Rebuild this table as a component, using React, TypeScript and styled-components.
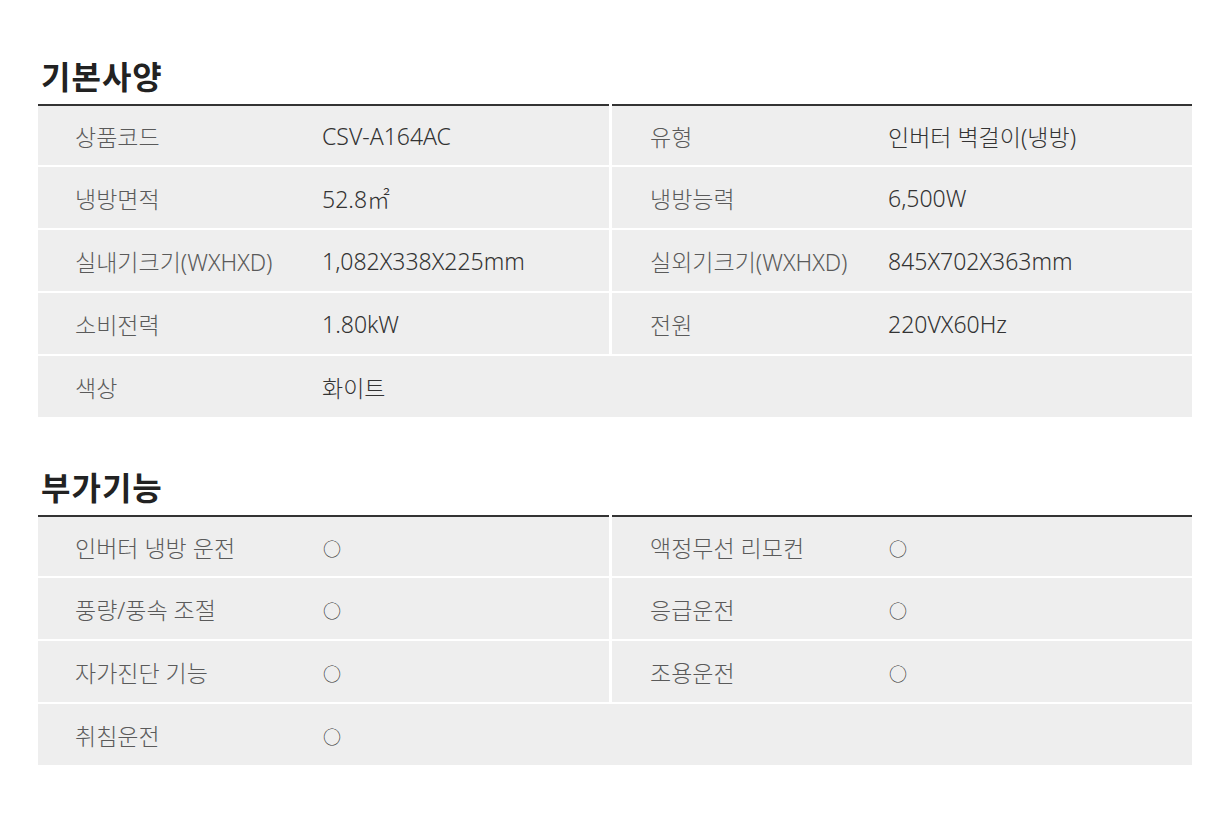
import React from 'react';
import styled, { createGlobalStyle } from 'styled-components';

type Spec = { label: string; value: string };

const basicSpecs: Spec[] = [
  { label: '상품코드', value: 'CSV-A164AC' },
  { label: '유형', value: '인버터 벽걸이(냉방)' },
  { label: '냉방면적', value: '52.8㎡' },
  { label: '냉방능력', value: '6,500W' },
  { label: '실내기크기(WXHXD)', value: '1,082X338X225mm' },
  { label: '실외기크기(WXHXD)', value: '845X702X363mm' },
  { label: '소비전력', value: '1.80kW' },
  { label: '전원', value: '220VX60Hz' },
  { label: '색상', value: '화이트' },
];

const extraSpecs: Spec[] = [
  { label: '인버터 냉방 운전', value: '○' },
  { label: '액정무선 리모컨', value: '○' },
  { label: '풍량/풍속 조절', value: '○' },
  { label: '응급운전', value: '○' },
  { label: '자가진단 기능', value: '○' },
  { label: '조용운전', value: '○' },
  { label: '취침운전', value: '○' },
];

const GlobalStyle = createGlobalStyle`
  html, body {
    margin: 0;
    padding: 0;
    background: #ffffff;
  }
  body {
    font-family: 'Noto Sans', 'Noto Sans CJK KR', sans-serif;
    color: #333;
  }
`;

const Page = styled.div`
  width: 1154px;
  padding: 57px 0 40px 38px;
`;

const Section = styled.section`
  & + & {
    margin-top: 51px;
  }
`;

const Title = styled.h2`
  margin: 0 0 11px 3px;
  font-family: 'Noto Sans CJK KR', sans-serif;
  font-size: 32px;
  line-height: 36px;
  font-weight: 700;
  color: #222;
  letter-spacing: 1px;
`;

const Table = styled.div`
  display: grid;
  grid-template-columns: 571px 580px;
  column-gap: 3px;
  row-gap: 2px;
`;

const Cell = styled.div<{ $first: boolean; $wide: boolean }>`
  display: flex;
  align-items: center;
  height: 61px;
  box-sizing: border-box;
  background: #eeeeee;
  border-top: ${({ $first }) => ($first ? '2px solid #333' : 'none')};
  padding-left: ${({ $wide }) => ($wide ? '37px' : '0')};
  grid-column: ${({ $wide }) => ($wide ? '1 / -1' : 'auto')};
`;

const Label = styled.div<{ $width: number; $pad: number }>`
  box-sizing: border-box;
  width: ${({ $width }) => $width}px;
  padding-left: ${({ $pad }) => $pad}px;
  font-size: 23px;
  font-weight: 300;
  color: #5a5a5a;
  white-space: nowrap;
`;

const Value = styled.div`
  font-size: 23px;
  font-weight: 300;
  color: #333;
  white-space: nowrap;
`;

const Mark = styled.span`
  font-family: 'Noto Sans CJK KR', sans-serif;
  font-size: 18px;
  color: #333;
  margin-left: 1px;
`;

const SpecTable = ({ rows, marks }: { rows: Spec[]; marks?: boolean }) => (
  <Table>
    {rows.map((row, i) => {
      const right = i % 2 === 1;
      const wide = i === rows.length - 1 && rows.length % 2 === 1;
      return (
        <Cell key={row.label} $first={i < 2} $wide={wide}>
          <Label $width={wide ? 247 : right ? 276 : 284} $pad={wide ? 0 : right ? 38 : 37}>
            {row.label}
          </Label>
          <Value>{marks ? <Mark>{row.value}</Mark> : row.value}</Value>
        </Cell>
      );
    })}
  </Table>
);

const App = () => (
  <>
    <GlobalStyle />
    <Page>
      <Section>
        <Title>기본사양</Title>
        <SpecTable rows={basicSpecs} />
      </Section>
      <Section>
        <Title>부가기능</Title>
        <SpecTable rows={extraSpecs} marks />
      </Section>
    </Page>
  </>
);

export default App;
